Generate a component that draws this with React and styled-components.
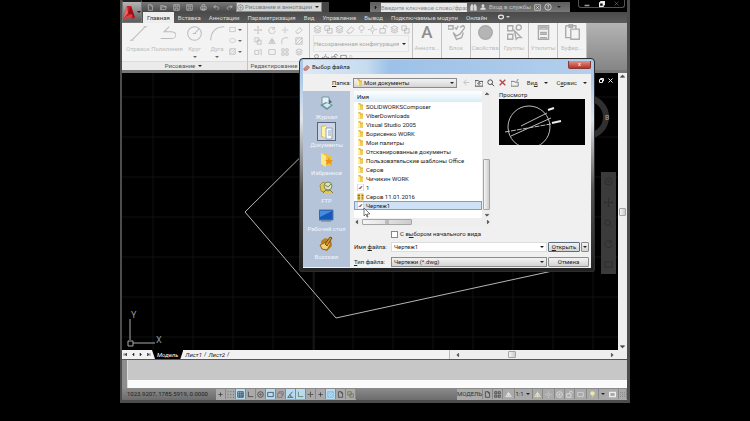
import React, { useState } from 'react';
import styled, { createGlobalStyle } from 'styled-components';

const GlobalStyle = createGlobalStyle`
  * {
    box-sizing: border-box;
  }

  body {
    margin: 0;
    background: #000;
    color: #222;
    font: 6px/8px Roboto, "Liberation Sans", sans-serif;
  }

  button, input, select {
    margin: 0;
    padding: 0;
    border: 0;
    border-radius: 0;
    background: none;
    color: inherit;
    font: inherit;
  }

  svg {
    display: block;
    flex: none;
  }
`;

const StyledPage = styled.div`
  display: flex;
  height: 100vh;
  padding: 0 16% 18px;
`;

const StyledWindow = styled.main`
  position: relative;
  flex: 1;
  min-width: 0;
  display: flex;
  flex-direction: column;
  border: solid #4c4c4c;
  border-width: 0 3px 3px 2px;
`;

const StyledHeader = styled.header`
  display: grid;
  grid-template-columns: 20px 1fr;
  background: #505050;
`;

const StyledAppButton = styled.button`
  grid-row: span 2;
  display: flex;
  align-items: center;
  justify-content: center;
  background: linear-gradient(#b5b5b5, #5c5c5c);
  border: 1px solid #777;
  border-top: 2px solid #222;
`;

const StyledTitleBar = styled.div`
  display: flex;
  height: 12px;
  padding-top: 2px;
  background: #000;
`;

const StyledQuickAccess = styled.div`
  display: flex;
  align-items: center;
  justify-content: space-between;
  width: 94px;
  padding: 0 2px 0 4px;
  color: #bbb;
  background: linear-gradient(#777, #4a4a4a);
`;

const StyledIconButton = styled.button`
  display: flex;
  align-items: center;
  justify-content: center;
  width: ${({ $width }) => $width || 9}px;
  height: 9px;
`;

const StyledWorkspace = styled.div`
  display: flex;
  align-items: center;
  width: 93px;
  height: 10px;
  background: #444;
  padding-right: 7px;
`;

const StyledSelectBox = styled.div`
  position: relative;
  display: flex;
  align-items: center;
  flex: 1;
  min-width: 0;
  height: 10px;
  border: 1px solid ${({ $border }) => $border || '#8a8a8a'};
  background: ${({ $background }) => $background || 'linear-gradient(#f3f3f3, #d4d4d4)'};
  color: ${({ $color }) => $color || '#222'};
  padding-left: ${({ $tight }) => ($tight ? 0 : 2)}px;
  gap: ${({ $gap }) => $gap || 3}px;

  select, input {
    flex: 1;
    min-width: 0;
    height: 8px;
    appearance: none;
    outline: none;
  }
`;

const StyledCaret = styled.span`
  width: 0;
  margin: 0 2px;
  border: 2px solid transparent;
  border-top-color: ${({ $color }) => $color || '#222'};
  border-bottom: 0;
`;

const StyledInfoCenter = styled.div`
  display: flex;
  align-items: center;
  gap: 3px;
  width: 200px;
  margin-left: auto;
  padding: 0 3px;
  color: #ddd;
  background: linear-gradient(#5d5d5d, #777);
  white-space: nowrap;

  input {
    width: 86px;
    height: 9px;
    padding: 0;
    background: #e8e8e8;
  }

  input::placeholder {
    color: #8b8b8b;
  }

  span {
    color: #c4c4c4;
  }
`;

const StyledWindowButtons = styled.div`
  display: flex;
  align-items: center;
  justify-content: space-around;
  width: 47px;
  height: 8px;
  margin: -2px 2px 0 8px;
  color: #eee;
  border: 1px solid #555;
  border-top: 0;
  border-radius: 0 0 3px 3px;
`;

const StyledTabs = styled.nav`
  display: flex;
  align-items: stretch;
  height: 11px;
  padding-left: 1px;
  color: #eee;
  background: linear-gradient(#4a4a4a, #5b5b5b);
`;

const StyledTab = styled.button`
  padding: 1px 4px 0 4px;
  white-space: nowrap;
  color: ${({ $active }) => ($active ? '#333' : '#ddd')};
  background: ${({ $active }) => ($active ? '#eee' : 'none')};
`;

const StyledRibbon = styled.section`
  display: flex;
  height: 47px;
  background: linear-gradient(#b4b4b4, #858585);
`;

const StyledPanel = styled.div`
  display: flex;
  flex-direction: column;
  flex: none;
  width: ${({ $width }) => $width}px;
  border-right: 1px solid #c2c2c2;
  background: #f3f3f3;
  color: #bcbcbc;
`;

const StyledPanelBody = styled.div`
  display: flex;
  flex: 1;
  padding: 1px 3px 0;
  justify-content: space-between;
`;

const StyledPanelTitle = styled.div`
  display: flex;
  align-items: center;
  justify-content: center;
  gap: 1px;
  height: 9px;
  border-top: 1px solid #ddd;
  color: #555;
  background: #ebebeb;
`;

const StyledTool = styled.button`
  display: flex;
  flex-direction: column;
  align-items: center;
  gap: 3px;
  width: ${({ $width }) => $width || 28}px;
  padding-top: 1px;
  color: inherit;
  white-space: nowrap;
`;

const StyledToolGrid = styled.div`
  display: grid;
  grid-template-columns: repeat(${({ $columns }) => $columns}, 1fr);
  grid-auto-rows: 11px;
  flex: 1;
  align-items: center;
  justify-items: center;
`;

const StyledLayers = styled.div`
  display: flex;
  flex-direction: column;
  flex: 1;
  min-width: 0;
  gap: 1px;
  padding-top: 1px;
`;

const StyledIconRow = styled.div`
  display: flex;
  align-items: center;
  gap: 2px;
`;

const StyledWorkArea = styled.div`
  display: flex;
  flex: 1;
  min-height: 0;
  border-top: 3px solid #777;
`;

const StyledCanvas = styled.div`
  position: relative;
  flex: 1;
  background: #000;
  overflow: hidden;
`;

const StyledMdiButtons = styled.div`
  position: absolute;
  top: 3px;
  right: 3px;
  display: flex;
  color: #eee;
`;

const StyledViewWheel = styled.svg`
  position: absolute;
  top: 19px;
  right: 3px;
`;

const StyledNavBar = styled.div`
  position: absolute;
  top: 99px;
  right: 2px;
  width: 15px;
  height: 102px;
  padding: 5px 3px;
  display: flex;
  flex-direction: column;
  justify-content: space-between;
  background: #3b3b3b;
  color: #2c2c2c;
`;

const StyledScroll = styled.div`
  display: flex;
  flex: none;
  flex-direction: ${({ $vertical }) => ($vertical ? 'column' : 'row')};
  align-items: center;
  justify-content: space-between;
  ${({ $vertical, $size }) => ($vertical ? `width: ${$size}px;` : `height: ${$size}px;`)}
  background: #eee;
  color: #444;
`;

const StyledScrollEnd = styled.div`
  display: flex;
  flex-direction: column;
  align-items: center;
  gap: 2px;
`;

const StyledThumb = styled.span`
  display: flex;
  align-items: center;
  justify-content: center;
  width: ${({ $width }) => $width}px;
  height: ${({ $height }) => $height}px;
  border: 1px solid #a5a5a5;
  border-radius: 1px;
  background: linear-gradient(90deg, #f5f5f5, #ccc);
`;

const StyledSheetBar = styled.div`
  display: flex;
  height: 10px;
  background: #f2f2f2;
  border-bottom: 1px solid #555;
`;

const StyledSheetArrows = styled.div`
  display: flex;
  width: 30px;
  justify-content: space-around;
  align-items: center;
`;

const StyledSheet = styled.button`
  padding: 0 ${({ $active }) => ($active ? 5 : 2)}px;
  font-style: italic;
  color: ${({ $active }) => ($active ? '#fff' : '#222')};
  background: ${({ $active }) => ($active ? '#000' : 'none')};
  clip-path: ${({ $active }) => ($active ? 'polygon(0 0, 100% 0, calc(100% - 3px) 100%, 3px 100%)' : 'none')};
`;

const StyledSheetScroll = styled(StyledScroll)`
  width: 178px;
  margin-left: auto;
  padding: 0 12px 0 5px;
  border-left: 1px solid #bbb;
`;

const StyledCommand = styled.div`
  display: grid;
  grid-template: 20px 8px / 6px 1fr;
  background: #c7c7c7;

  i {
    grid-row: span 2;
    background: #8e8e8e;
    border-right: 1px solid #ddd;
  }

  input {
    width: 100%;
    height: 8px;
    padding: 0 4px;
    background: #fbfbfb;
    outline: none;
  }
`;

const StyledStatusBar = styled.footer`
  display: flex;
  align-items: center;
  height: 12px;
  padding-left: 5px;
  color: #222;
  background: linear-gradient(#8b8b8b, #6c6c6c);
`;

const StyledCoords = styled.span`
  width: 89px;
`;

const StyledStatusGroup = styled.div`
  display: flex;
  align-items: center;
  height: 11px;
  margin-left: ${({ $end }) => ($end ? 'auto' : 0)};
  background: #aaa;
`;

const StyledStatusButton = styled.button`
  display: flex;
  align-items: center;
  justify-content: center;
  width: ${({ $width }) => $width || 10}px;
  height: 10px;
  border-right: 1px solid #888;
  color: ${({ $color }) => $color || '#333'};
  background: ${({ $on }) => ($on ? '#b7dcf2' : 'none')};
`;

const StyledDialog = styled.section`
  position: absolute;
  top: 58px;
  left: 177px;
  width: 296px;
  padding: 1px 3px 3px;
  border: 1px solid #2d2d2d;
  border-radius: 4px 4px 2px 2px;
  background: linear-gradient(#a9c7e8, #a9c7e8 16px, #dfe5ec 60px, #555 130px, #222);
`;

const StyledDialogTitle = styled.div`
  display: flex;
  align-items: center;
  gap: 2px;
  height: 14px;
  background: linear-gradient(90deg, #dce8f4 0, #c7dcf1 22%, #9dc1e8 30%, #b3cfec);
  color: #222;

  h1 {
    margin: 0;
    font: inherit;
    flex: 1;
  }
`;

const StyledCloseButton = styled.button`
  width: 23px;
  height: 8px;
  margin-bottom: 5px;
  border: 1px solid #873a35;
  border-top: 0;
  border-radius: 0 0 2px 2px;
  background: linear-gradient(#dc968b, #bf3022);
  color: #fff;
  line-height: 6px;
`;

const StyledDialogBody = styled.form`
  display: flex;
  flex-direction: column;
  gap: 3px;
  padding: 3px 2px 1px 0;
  background: #f0f0f0;
`;

const StyledLookIn = styled.div`
  display: flex;
  align-items: center;
  height: 11px;

  label {
    width: 51px;
    padding-left: 29px;
  }
`;

const StyledLookInSelect = styled.div`
  display: flex;
  width: 108px;
`;

const StyledDialogTools = styled.div`
  display: flex;
  align-items: center;
  gap: 2px;
  flex: 1;
  padding-left: 5px;

  button {
    color: #333;
    display: flex;
    align-items: center;
  }
`;

const StyledMenuButton = styled.button`
  gap: 4px;
  margin-left: 5px;
`;

const StyledDialogMain = styled.div`
  display: flex;
  gap: 4px;
`;

const StyledPlaces = styled.nav`
  display: flex;
  flex: none;
  flex-direction: column;
  width: 47px;
  padding-top: 3px;
  background: #b5c4d9;
`;

const StyledPlace = styled.button`
  display: flex;
  flex-direction: column;
  align-items: center;
  justify-content: space-between;
  height: 28px;
  padding-bottom: 1px;
  color: #f2f6fc;
  white-space: nowrap;

  div {
    width: 19px;
    height: 19px;
    display: flex;
    align-items: center;
    justify-content: center;
    border: 1px solid ${({ $active }) => ($active ? '#56657d' : 'transparent')};
    background: ${({ $active }) => ($active ? '#cbd5e3' : 'none')};
  }
`;

const StyledDialogContent = styled.div`
  display: flex;
  flex-direction: column;
  flex: 1;
  gap: 4px;
`;

const StyledBrowser = styled.div`
  display: flex;
  gap: 8px;
`;

const StyledFileBox = styled.div`
  display: flex;
  flex-direction: column;
  width: 137px;
  background: #fff;
`;

const StyledFileScroll = styled.div`
  display: flex;
  height: 127px;
`;

const StyledFileTable = styled.table`
  align-self: flex-start;
  flex: 1;
  border-collapse: collapse;

  th {
    height: 11px;
    padding: 0 3px;
    font-weight: normal;
    text-align: left;
    background: linear-gradient(#fff, #d9edf7);
  }

  td {
    height: 9px;
    padding: 0;
  }
`;

const StyledFile = styled.div`
  display: flex;
  align-items: center;
  gap: 2px;
  height: 9px;
  padding-left: 3px;
  white-space: nowrap;
  line-height: 7px;
  outline: ${({ $selected }) => ($selected ? '1px solid #7d9ec5' : 'none')};
  outline-offset: -1px;
  background: ${({ $selected }) => ($selected ? '#cfe1f7' : 'none')};
`;

const StyledPreview = styled.figure`
  flex: 1;
  margin: 0;

  svg {
    width: 86px;
    height: 46px;
    background: #000;
  }
`;

const StyledFields = styled.div`
  display: grid;
  grid-template-columns: 36px 156px 41px;
  column-gap: 1px;
  row-gap: 5px;
  align-items: center;
`;

const StyledCheck = styled.label`
  display: flex;
  align-items: center;
  gap: 2px;
  height: 8px;
  margin-left: 37px;

  input {
    width: 7px;
    height: 7px;
    appearance: none;
    border: 1px solid #888;
    background: #fff;
  }
`;

const StyledActions = styled.div`
  display: flex;
  gap: 1px;
`;

const StyledButton = styled.button`
  display: flex;
  align-items: center;
  justify-content: center;
  flex: ${({ $narrow }) => ($narrow ? 'none' : 1)};
  width: ${({ $narrow }) => ($narrow ? '8px' : 'auto')};
  height: 10px;
  border: 1px solid ${({ $primary }) => ($primary ? '#5b6f80' : '#8c8c8c')};
  border-radius: 1px;
  background: linear-gradient(#f4f4f4, #d2d2d2);
`;

const StyledCursor = styled.svg`
  position: absolute;
  top: 149px;
  left: 63px;
`;

const StyledLetter = styled.span`
  font-size: 17px;
  line-height: 17px;
  font-weight: 500;
  color: #8d8d8d;
`;

const PATHS = {
  new: 'M2 1h4l2 2v6H2zM6 1v2h2',
  open: 'M1 8V2h3l1 1h3v2M1 8l2-4h6L8 8z',
  save: 'M1 1h8v8H1zM3 1v3h4V1M3 9V6h4v3',
  print: 'M3 4V1h4v3M1 4h8v4H1zM3 6h4v3H3z',
  undo: 'M4 2L1 4l3 2M1 4h5c3 0 3 4 0 4',
  redo: 'M6 2l3 2-3 2M9 4H4c-3 0-3 4 0 4',
  line: 'M1 9L9 1M0 9h2M8 1h2',
  polyline: 'M1 8h6a3 2 0 0 0 0-4H3L6 1',
  circle: 'M9 5A4 4 0 1 1 1 5A4 4 0 1 1 9 5M5 5l3-3M4 5h2',
  arc: 'M1 9C1 4 4 1 9 1',
  rect: 'M1 2h8v6H1z',
  ellipse: 'M1 5c0-4 8-4 8 0s-8 4-8 0',
  hatch: 'M1 1h8v8H1zM1 5l4-4M1 9l8-8M5 9l4-4',
  move: 'M5 0v10M0 5h10M4 1h2M4 9h2M1 4v2M9 4v2',
  rotate: 'M8 3a4 4 0 1 0 1 3M8 1v3H5',
  trim: 'M1 5h3M6 5h3M5 1v8',
  erase: 'M1 7l5-5 3 3-4 4H2z',
  copy: 'M1 1h5v5H1zM4 4h5v5H4z',
  mirror: 'M5 1v8M4 3L1 8h3zM6 3l3 5H6z',
  fillet: 'M1 9V5a4 4 0 0 1 4-4h4',
  stretch: 'M1 3h5v5H1zM7 2h2v7',
  array: 'M1 1h3v3H1zM6 1h3v3H6zM1 6h3v3H1zM6 6h3v3H6z',
  layers: 'M5 1l4 2-4 2-4-2zM1 5l4 2 4-2M1 7l4 2 4-2',
  bulb: 'M5 1c-4 0-3 4-1 5h2c2-1 3-5-1-5M4 8h2',
  sun: 'M7 5a2 2 0 1 1-4 0a2 2 0 1 1 4 0M5 0v2M5 8v2M0 5h2M8 5h2',
  lock: 'M1 4h6v5H1zM5 4V2c0-2 4-2 4 0v1',
  search: 'M7 4a3 3 0 1 1-6 0a3 3 0 1 1 6 0M6 6l3 3',
  user: 'M5 1a2 2 0 1 0 0 4a2 2 0 1 0 0-4M1 9c0-4 8-4 8 0z',
  binocular: 'M1 9V4l1-3h2v8zM6 9V1h2l1 3v5zM4 4h2',
  exchange: 'M1 1h8v8H1zM3 3l4 4M7 3L3 7',
  help: 'M9 5A4 4 0 1 1 1 5A4 4 0 1 1 9 5M4 4c0-2 3-1 2 0L5 5v1M5 7v1',
  gear: 'M9 5A4 4 0 1 1 1 5A4 4 0 1 1 9 5M6 5a1 1 0 1 1-2 0a1 1 0 1 1 2 0',
  minimize: 'M1 7h8M1 8h8',
  restore: 'M3 3V1h6v5H7M1 3h6v6H1z',
  cross: 'M1 1l8 8M9 1L1 9',
  back: 'M5 1L1 5l4 4M1 5h8',
  up: 'M0 2h4l1 1h5v6H0zM5 8V5M3 6l2-2 2 2',
  folder: 'M0 3h4l1 1h4v5H0zM7 3l2-3',
  left: 'M6 2L3 5l3 3z',
  right: 'M4 2l3 3-3 3z',
  top: 'M2 6l3-3 3 3z',
  bottom: 'M2 4l3 3 3-3z',
  first: 'M2 2v6M7 2L4 5l3 3z',
  last: 'M8 2v6M3 2l3 3-3 3z',
  ortho: 'M2 1v7h7',
  grid: 'M1 1h8v8H1zM4 1v8M7 1v8M1 4h8M1 7h8',
  polar: 'M1 9L8 1M1 9h8M6 9c0-2-1-3-2-4',
  dots: 'M1 1h1M5 1h1M9 1h1M1 5h1M5 5h1M9 5h1M1 9h1M5 9h1M9 9h1',
  plus: 'M5 2v6M2 5h6',
  block: 'M0 1h3v2H0zM4 2l1 1 1-2M7 2l2-1 1 1-3 4-2 1-2-2M3 5l2 4 3-1 1-3',
  sphere: 'M9 5A4 4 0 1 1 1 5A4 4 0 1 1 9 5',
  group: 'M1 1h3v3H1zM9 2a1 1 0 1 1-3 0a1 1 0 1 1 3 0M1 6h3v3H1zM5 4l4 4H7L6 9z',
  utils: 'M2 1h6v8H2zM3 2h4v1H3zM3 5h4M3 6h4M3 8h4',
  clipboard: 'M1 1h6v2M1 1v7h3M3 0h2v2H3zM4 3h5v6H4z',
};

const SOLID = ['left', 'right', 'top', 'bottom', 'first', 'last', 'user', 'binocular'];

const Icon = ({ name, size = 7, weight = 1, fill, color }) => (
  <svg width={size} height={size} viewBox="0 0 10 10" aria-hidden="true" color={color}>
    <path
      d={PATHS[name]}
      fill={fill || (SOLID.includes(name) ? 'currentColor' : 'none')}
      stroke="currentColor"
      strokeWidth={weight}
    />
  </svg>
);

const FolderIcon = ({ size = 7 }) => (
  <svg width={size} height={size} viewBox="0 0 14 14" aria-hidden="true">
    <path d="M2 1l5-1v3h5v10H2z" fill="#dba72c" />
    <path d="M2 1l4 3v10l-4-2z" fill="#fff0a0" />
    <path d="M6 5h6v8H6z" fill="#f1cd58" />
  </svg>
);

const FileIcon = ({ type }) => {
  if (type === 'folder') return <FolderIcon />;
  if (type === 'archive') {
    return (
      <svg width="7" height="8" viewBox="0 0 14 16" aria-hidden="true">
        <path d="M1 1h12v14H1z" fill="#d8b43d" />
        <path d="M1 4h12v2H1zM1 9h12v2H1z" fill="#8b6c2b" />
        <path d="M6 1h3v14H6z" fill="#f4e3a0" />
      </svg>
    );
  }
  return (
    <svg width="7" height="7" viewBox="0 0 14 14" aria-hidden="true">
      <path d="M1 0h12v14H1z" fill="#fff" stroke="#b5bdc9" />
      <path d="M3 9l6-5 2 1-4 5z" fill="#777" />
      <path d="M3 9h4" stroke="#b34c43" />
    </svg>
  );
};

const PlaceIcon = ({ type }) => (
  <svg width="15" height="16" viewBox="0 0 15 16" aria-hidden="true">
    {type === 'history' && (
      <>
        <path d="M3 1h7v8H3z" fill="#e5f1f5" stroke="#7898a6" />
        <path d="M1 9l6-3 7 3-6 5z" fill="#6992a2" />
        <path d="M4 9l4-2 4 2-4 3z" fill="#d7e8eb" />
        <path d="M10 3l3 3-3 2" fill="#447086" />
      </>
    )}
    {type === 'documents' && (
      <>
        <path d="M2 2l5-1v13l-5-1z" fill="#e4bb43" />
        <path d="M3 3l4-1v12l-4-2z" fill="#fff3aa" />
        <path d="M7 4h6v11H7z" fill="#f9fafb" stroke="#9aa4b0" />
        <path d="M9 7h3M9 9h3M9 11h3" stroke="#82a5cd" />
      </>
    )}
    {type === 'favorites' && (
      <>
        <path d="M2 1h6v3h5v10H2z" fill="#efc340" />
        <path d="M2 1l5 3v11l-5-3z" fill="#fce986" />
        <path d="M10 5l1 3h3l-2 2 1 3-3-2-3 2 1-3-2-2h3z" fill="#e8941a" />
      </>
    )}
    {type === 'ftp' && (
      <>
        <path d="M1 5l3-3 4 2-2 8-4-1z" fill="#e3c954" stroke="#a3924a" />
        <circle cx="9" cy="6" r="4" fill="#d9e2b8" stroke="#7d8a62" />
        <path d="M6 5l3 2 3-3" stroke="#6f8a57" fill="none" />
        <path d="M4 13l3-3 2 1 2-1 3 3" stroke="#7d7448" fill="#e3c954" />
      </>
    )}
    {type === 'desktop' && (
      <>
        <path d="M0 2h14v10H0z" fill="#1759ba" stroke="#537baa" />
        <path d="M1 3h12L1 9z" fill="#438de1" />
        <path d="M2 13h10" stroke="#617891" />
      </>
    )}
    {type === 'buzzsaw' && (
      <>
        <path d="M2 5l4-3 6 2 1 6-5 5-5-2z" fill="#b98324" />
        <path d="M1 9l6-3 5 1-4 7-5-1z" fill="#efd07a" stroke="#96631b" />
        <path d="M6 8l5-7 2 1-5 8z" fill="#d89122" stroke="#745022" />
      </>
    )}
  </svg>
);

const tabs = ['Главная', 'Вставка', 'Аннотации', 'Параметризация', 'Вид', 'Управление', 'Вывод', 'Подключаемые модули', 'Онлайн'];

const drawTools = [
  { label: 'Отрезок', icon: 'line', width: 26 },
  { label: 'Полилиния', icon: 'polyline', width: 32 },
  { label: 'Круг', icon: 'circle', width: 23, menu: true },
  { label: 'Дуга', icon: 'arc', width: 22, menu: true },
];

const sidePanels = [
  { label: 'Аннота...' },
  { label: 'Блок', icon: 'block' },
  { label: 'Свойства', icon: 'sphere', fill: '#b5b5b5' },
  { label: 'Группы', icon: 'group' },
  { label: 'Утилиты', icon: 'utils' },
  { label: 'Буфер...', icon: 'clipboard' },
];

const places = [
  { label: 'Журнал', type: 'history' },
  { label: 'Документы', type: 'documents' },
  { label: 'Избранное', type: 'favorites' },
  { label: 'FTP', type: 'ftp' },
  { label: 'Рабочий стол', type: 'desktop' },
  { label: 'Buzzsaw', type: 'buzzsaw' },
];

const files = [
  { name: 'SOLIDWORKSComposer', type: 'folder' },
  { name: 'ViberDownloads', type: 'folder' },
  { name: 'Visual Studio 2005', type: 'folder' },
  { name: 'Борисенко WORK', type: 'folder' },
  { name: 'Мои палитры', type: 'folder' },
  { name: 'Отсканированные документы', type: 'folder' },
  { name: 'Пользовательские шаблоны Office', type: 'folder' },
  { name: 'Серов', type: 'folder' },
  { name: 'Чичикин WORK', type: 'folder' },
  { name: '1', type: 'drawing' },
  { name: 'Серов 11.01.2016', type: 'archive' },
  { name: 'Чертеж1', type: 'drawing' },
];

const modes = [
  { icon: 'plus' },
  { icon: 'dots' },
  { icon: 'grid', on: true },
  { icon: 'ortho' },
  { icon: 'gear' },
  { icon: 'rect', on: true },
  { icon: 'restore', color: '#865b65' },
  { icon: 'polar', on: true },
  { icon: 'ortho', on: true, color: '#52703c' },
  { icon: 'trim' },
  { icon: 'plus' },
  { icon: 'hatch', on: true, color: '#7fb4d8' },
  { icon: 'new' },
  { icon: 'copy', color: '#70702f' },
];

const Header = () => (
  <StyledHeader>
    <StyledAppButton aria-label="Меню приложения">
      <svg width="13" height="15" viewBox="0 0 13 15">
        <path d="M1 14L5 1h4l4 12-3 1-1-3H5z" fill="#c51e25" />
        <path d="M1 14L5 1l1 7z" fill="#ef6464" />
        <path d="M6 8l3-7 4 12z" fill="#9c1118" />
        <path d="M1 14l8-5 2 2-7 3z" fill="#e33a3e" />
      </svg>
      <StyledCaret />
    </StyledAppButton>
    <StyledTitleBar>
      <StyledQuickAccess>
        {['new', 'open', 'save', 'save', 'print', 'undo', 'redo'].map((name, index) => (
          <StyledIconButton key={index} aria-label={name}><Icon name={name} /></StyledIconButton>
        ))}
      </StyledQuickAccess>
      <StyledWorkspace>
        <StyledSelectBox $background="#d5d5d5" $color="#777" $gap={1} $tight>
          <Icon name="gear" />
          <select aria-label="Рабочее пространство">
            <option>Рисование и аннотации</option>
          </select>
          <StyledCaret />
        </StyledSelectBox>
      </StyledWorkspace>
      <StyledInfoCenter>
        <Icon name="right" size={5} color="#111" />
        <input aria-label="Поиск" placeholder="Введите ключевое слово/фразу" />
        <Icon name="binocular" />
        <Icon name="user" size={6} />
        <span>Вход в службы</span>
        <Icon name="exchange" />
        <Icon name="help" size={8} />
        <StyledCaret />
      </StyledInfoCenter>
      <StyledWindowButtons>
        <StyledIconButton aria-label="Свернуть"><Icon name="minimize" size={6} /></StyledIconButton>
        <StyledIconButton aria-label="Восстановить"><Icon name="restore" size={6} weight={2} /></StyledIconButton>
        <StyledIconButton aria-label="Закрыть"><Icon name="cross" size={5} color="#888" /></StyledIconButton>
      </StyledWindowButtons>
    </StyledTitleBar>
    <StyledTabs>
      {tabs.map((tab, index) => (
        <StyledTab key={tab} $active={index === 0}>{tab}</StyledTab>
      ))}
      <StyledIconButton $width={28} aria-label="Вид ленты">
        <Icon name="ellipse" size={6} weight={2} />
        <StyledCaret $color="#ccc" />
      </StyledIconButton>
    </StyledTabs>
  </StyledHeader>
);

const Ribbon = () => (
  <StyledRibbon>
    <StyledPanel $width={126}>
      <StyledPanelBody>
        {drawTools.map((tool) => (
          <StyledTool key={tool.label} $width={tool.width}>
            <Icon name={tool.icon} size={17} weight={0.6} />
            <span>{tool.label}</span>
            {tool.menu && <StyledCaret $color="#666" />}
          </StyledTool>
        ))}
        <StyledToolGrid $columns={2}>
          {['rect', 'ellipse', 'hatch'].map((name) => (
            <React.Fragment key={name}>
              <Icon name={name} />
              <StyledCaret $color="#666" />
            </React.Fragment>
          ))}
        </StyledToolGrid>
      </StyledPanelBody>
      <StyledPanelTitle>Рисование <StyledCaret /></StyledPanelTitle>
    </StyledPanel>
    <StyledPanel $width={62}>
      <StyledPanelBody>
        <StyledToolGrid $columns={4}>
          {['move', 'rotate', 'trim', 'erase', 'copy', 'mirror', 'fillet', 'hatch', 'stretch', 'rect', 'array', 'layers'].map((name) => (
            <Icon key={name} name={name} size={8} />
          ))}
        </StyledToolGrid>
      </StyledPanelBody>
      <StyledPanelTitle>Редактирование <StyledCaret /></StyledPanelTitle>
    </StyledPanel>
    <StyledPanel $width={103}>
      <StyledPanelBody>
        <StyledLayers>
          <StyledIconRow>
            {['layers', 'copy', 'layers', 'erase', 'bulb', 'sun', 'lock', 'layers', 'copy'].map((name, index) => (
              <Icon key={index} name={name} size={9} />
            ))}
          </StyledIconRow>
          <StyledSelectBox $background="#f3f3f3" $border="#e4e4e4" $color="#a8a8a8" $gap={1} $tight>
            <select aria-label="Конфигурация слоев">
              <option>Несохраненная конфигурация слоев</option>
            </select>
            <StyledCaret />
          </StyledSelectBox>
          <StyledIconRow>
            {['bulb', 'sun', 'lock', 'rect'].map((name) => (
              <Icon key={name} name={name} size={7} color="#777" />
            ))}
            <span>0</span>
          </StyledIconRow>
        </StyledLayers>
      </StyledPanelBody>
      <StyledPanelTitle>Слои</StyledPanelTitle>
    </StyledPanel>
    {sidePanels.map((panel) => (
      <StyledPanel key={panel.label} $width={29}>
        <StyledTool>
          {panel.icon ? <Icon name={panel.icon} fill={panel.fill} size={17} weight={0.8} color="#aaa" /> : <StyledLetter>A</StyledLetter>}
          <span>{panel.label}</span>
        </StyledTool>
      </StyledPanel>
    ))}
  </StyledRibbon>
);

const gridLines = Array.from({ length: 13 }, (_, index) => index * 40);

const Drawing = () => (
  <StyledWorkArea>
    <StyledCanvas>
      <svg width="100%" height="100%">
        {gridLines.map((offset) => (
          <g key={offset} stroke="#111">
            <path d={`M${offset + 31} 0v280`} />
            <path d={`M0 ${offset + 24}h500`} />
          </g>
        ))}
        <path d="M192 0v280" stroke="#202020" />
        <path d="M215 48L123 139l91 106 258-56" fill="none" stroke="#b5b5b5" />
        <g fill="none" stroke="#aaa">
          <path d="M8 267V246M11 270h22M6 268h5v5H6z" />
        </g>
        <g fill="#999" fontSize="9">
          <text x="9" y="245">Y</text>
          <text x="34" y="270">X</text>
        </g>
      </svg>
      <StyledMdiButtons>
        <StyledIconButton aria-label="Восстановить чертеж"><Icon name="restore" size={5} weight={2} /></StyledIconButton>
        <StyledIconButton aria-label="Закрыть чертеж"><Icon name="cross" size={5} weight={2} /></StyledIconButton>
      </StyledMdiButtons>
      <StyledViewWheel width="52" height="52" viewBox="0 0 52 52">
        <circle cx="24" cy="25" r="19" fill="none" stroke="#303030" strokeWidth="6" />
        <text x="42" y="28" fill="#aaa" fontSize="7">В</text>
      </StyledViewWheel>
      <StyledNavBar>
        {['gear', 'move', 'search', 'rotate', 'rect'].map((name) => (
          <Icon key={name} name={name} size={9} />
        ))}
      </StyledNavBar>
    </StyledCanvas>
    <StyledScroll $vertical $size={9}>
      <Icon name="top" size={7} />
      <StyledThumb $width={7} $height={8} />
      <Icon name="bottom" size={7} />
    </StyledScroll>
  </StyledWorkArea>
);

const Dialog = () => {
  const [selected, setSelected] = useState('Чертеж1');

  return (
    <StyledDialog role="dialog" aria-labelledby="dialog-title">
      <StyledDialogTitle>
        <Icon name="erase" size={7} color="#a84c49" fill="#d98c87" />
        <h1 id="dialog-title">Выбор файла</h1>
        <StyledCloseButton aria-label="Закрыть">x</StyledCloseButton>
      </StyledDialogTitle>
      <StyledDialogBody onSubmit={(event) => event.preventDefault()}>
        <StyledLookIn>
          <label htmlFor="look-in"><u>П</u>апка:</label>
          <StyledLookInSelect>
            <StyledSelectBox $gap={1}>
              <FolderIcon />
              <select id="look-in">
                <option>Мои документы</option>
              </select>
              <StyledCaret />
            </StyledSelectBox>
          </StyledLookInSelect>
          <StyledDialogTools>
            <StyledIconButton type="button" $width={10} aria-label="Назад"><Icon name="back" color="#b3b3b3" /></StyledIconButton>
            <StyledIconButton type="button" $width={10} aria-label="Вверх"><Icon name="up" size={8} /></StyledIconButton>
            <StyledIconButton type="button" $width={10} aria-label="Поиск"><Icon name="search" size={8} /></StyledIconButton>
            <StyledIconButton type="button" $width={10} aria-label="Удалить"><Icon name="cross" weight={2} color="#b9474c" /></StyledIconButton>
            <StyledIconButton type="button" $width={10} aria-label="Создать папку"><Icon name="folder" size={8} color="#666" /></StyledIconButton>
            <StyledMenuButton type="button"><span>Ви<u>д</u></span><StyledCaret /></StyledMenuButton>
            <StyledMenuButton type="button"><span>С<u>е</u>рвис</span><StyledCaret /></StyledMenuButton>
          </StyledDialogTools>
        </StyledLookIn>
        <StyledDialogMain>
          <StyledPlaces>
            {places.map(({ label, type }) => (
              <StyledPlace key={type} type="button" $active={type === 'documents'}>
                <div><PlaceIcon type={type} /></div>
                {label}
              </StyledPlace>
            ))}
          </StyledPlaces>
          <StyledDialogContent>
            <StyledBrowser>
              <StyledFileBox>
                <StyledFileScroll>
                  <StyledFileTable>
                    <thead>
                      <tr><th>Имя</th></tr>
                    </thead>
                    <tbody>
                      {files.map(({ name, type }) => (
                        <tr key={name} onClick={() => setSelected(name)}>
                          <td>
                            <StyledFile $selected={selected === name}>
                              <FileIcon type={type} />
                              {name}
                            </StyledFile>
                          </td>
                        </tr>
                      ))}
                    </tbody>
                  </StyledFileTable>
                  <StyledScroll $vertical $size={9}>
                    <Icon name="top" size={6} />
                    <StyledScrollEnd>
                      <StyledThumb $width={7} $height={51} />
                      <Icon name="bottom" size={6} />
                    </StyledScrollEnd>
                  </StyledScroll>
                </StyledFileScroll>
                <StyledScroll $size={8}>
                  <StyledIconRow>
                    <Icon name="left" size={6} />
                    <StyledThumb $width={50} $height={6}>
                      <Icon name="array" size={4} color="#888" />
                    </StyledThumb>
                  </StyledIconRow>
                  <Icon name="right" size={6} />
                </StyledScroll>
              </StyledFileBox>
              <StyledPreview>
                <figcaption>Просмотр</figcaption>
                <svg viewBox="0 0 86 46">
                  <g fill="none" stroke="#bbb">
                    <circle cx="30" cy="28" r="21" />
                    <path d="M22 27l26-13M12 37l40-18" />
                    <path d="M6 33l46-8" strokeDasharray="5 1" />
                  </g>
                  <path d="M49 11l6-2M53 24l9-2" stroke="#eee" strokeWidth="2" />
                </svg>
              </StyledPreview>
            </StyledBrowser>
            <StyledCheck>
              <input type="checkbox" />
              <span>С в<u>ы</u>бором начального вида</span>
            </StyledCheck>
            <StyledFields>
              <label htmlFor="file-name">Имя <u>ф</u>айла:</label>
              <StyledSelectBox $background="#fff" $border="#ddd">
                <input id="file-name" value={selected} onChange={(event) => setSelected(event.target.value)} />
                <StyledCaret />
              </StyledSelectBox>
              <StyledActions>
                <StyledButton $primary><span><u>О</u>ткрыть</span></StyledButton>
                <StyledButton type="button" $narrow aria-label="Варианты открытия"><StyledCaret /></StyledButton>
              </StyledActions>
              <label htmlFor="file-type"><u>Т</u>ип файла:</label>
              <StyledSelectBox>
                <select id="file-type">
                  <option>Чертежи (*.dwg)</option>
                </select>
                <StyledCaret />
              </StyledSelectBox>
              <StyledButton type="button">Отмена</StyledButton>
            </StyledFields>
          </StyledDialogContent>
        </StyledDialogMain>
      </StyledDialogBody>
      <StyledCursor width="8" height="10" viewBox="0 0 8 10">
        <path d="M1 0v8l2-2 1 3h1L4 6h3z" fill="#fff" stroke="#444" strokeWidth="0.7" />
      </StyledCursor>
    </StyledDialog>
  );
};

const Footer = () => (
  <>
    <StyledSheetBar>
      <StyledSheetArrows>
        {['first', 'left', 'right', 'last'].map((name) => (
          <Icon key={name} name={name} size={5} />
        ))}
      </StyledSheetArrows>
      <StyledSheet $active>Модель</StyledSheet>
      <StyledSheet>Лист1</StyledSheet>/
      <StyledSheet>Лист2</StyledSheet>/
      <StyledSheetScroll $size={9}>
        <Icon name="left" size={6} />
        <span />
        <StyledThumb $width={8} $height={7} />
        <span />
        <span />
        <span />
        <Icon name="right" size={6} />
      </StyledSheetScroll>
    </StyledSheetBar>
    <StyledCommand>
      <i />
      <span />
      <input aria-label="Командная строка" />
    </StyledCommand>
    <StyledStatusBar>
      <StyledCoords>1023.9207, 1785.5919, 0.0000</StyledCoords>
      <StyledStatusGroup>
        {modes.map(({ icon, on, color }, index) => (
          <StyledStatusButton key={index} $on={on} $color={color} aria-label={icon}>
            <Icon name={icon} />
          </StyledStatusButton>
        ))}
      </StyledStatusGroup>
      <StyledStatusGroup $end>
        <StyledStatusButton $width={26}>МОДЕЛЬ</StyledStatusButton>
        <StyledStatusButton aria-label="Лист"><Icon name="new" /></StyledStatusButton>
        <StyledStatusButton aria-label="Виды"><Icon name="array" /></StyledStatusButton>
        <StyledStatusButton $width={12} aria-label="Масштаб"><Icon name="mirror" color="#eee" /></StyledStatusButton>
        <StyledStatusButton $width={18}>1:1<StyledCaret /></StyledStatusButton>
        <StyledStatusButton aria-label="Аннотации"><Icon name="mirror" color="#f4ecc0" /></StyledStatusButton>
        <StyledStatusButton $width={12} aria-label="Автомасштаб"><Icon name="sun" color="#ccc" /></StyledStatusButton>
        <StyledStatusButton aria-label="Пространство"><Icon name="gear" color="#eee" /></StyledStatusButton>
        <StyledStatusButton aria-label="Блокировка"><Icon name="lock" color="#eee" /></StyledStatusButton>
        <StyledStatusButton $width={12} aria-label="Ускорение"><Icon name="rect" color="#ddd" /></StyledStatusButton>
        <StyledStatusButton $width={12} aria-label="Изоляция"><Icon name="bulb" color="#efe8a5" fill="#efe8a5" /></StyledStatusButton>
        <StyledCaret />
        <StyledStatusButton $width={12} aria-label="Очистить экран"><Icon name="rect" color="#eee" weight={2} /></StyledStatusButton>
        <StyledStatusButton $width={8} aria-label="Размер"><Icon name="dots" size={5} /></StyledStatusButton>
      </StyledStatusGroup>
    </StyledStatusBar>
  </>
);

const App = () => (
  <>
    <GlobalStyle />
    <StyledPage>
      <StyledWindow>
        <Header />
        <Ribbon />
        <Drawing />
        <Footer />
        <Dialog />
      </StyledWindow>
    </StyledPage>
  </>
);

export default App;
